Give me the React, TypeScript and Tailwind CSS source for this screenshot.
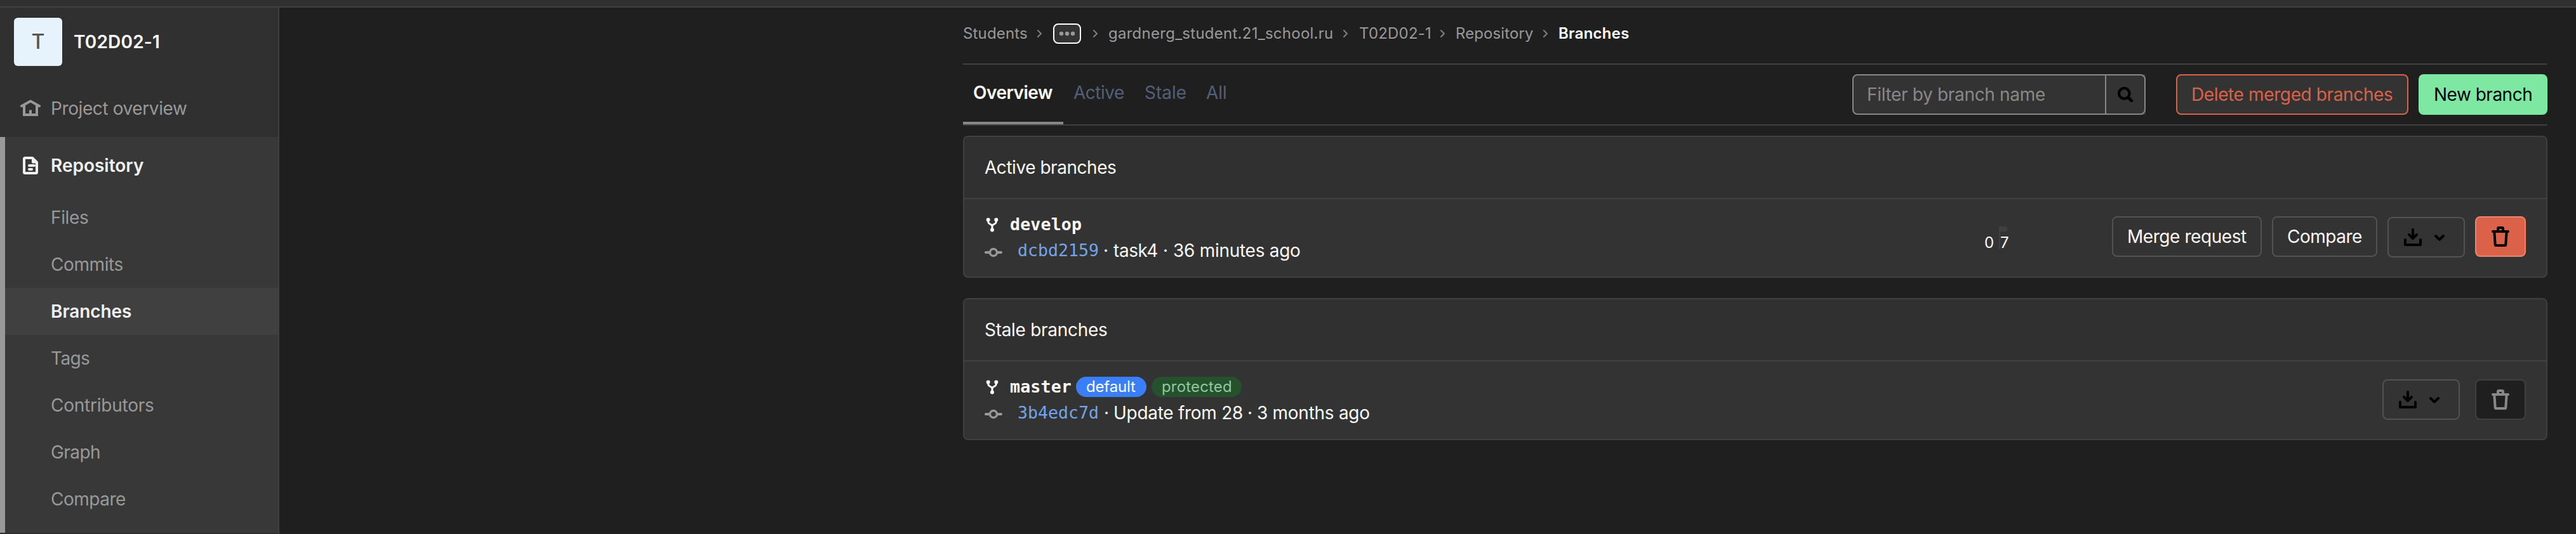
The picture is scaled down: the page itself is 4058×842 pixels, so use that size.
import type { ReactNode } from "react";

const navItems = [
  { label: "Files", tracking: "tracking-[-0.35px]" },
  { label: "Commits", tracking: "tracking-[-0.4px]" },
  { label: "Branches", tracking: "tracking-[-0.08px]", active: true },
  { label: "Tags", tracking: "tracking-[-0.6px]" },
  { label: "Contributors", tracking: "tracking-[-0.24px]" },
  { label: "Graph", tracking: "tracking-[-0.55px]" },
  { label: "Compare", tracking: "tracking-[-0.5px]" },
];

function HomeIcon() {
  return (
    <svg width="32" height="32" viewBox="0 0 32 32" fill="none" stroke="#999" strokeWidth="4">
      <path d="M2 12.2 16 4.6l14 7.6" strokeLinecap="round" strokeLinejoin="round" />
      <path d="M6 11v15h20V11M16 18.500v7" />
    </svg>
  );
}

function DocIcon() {
  return (
    <svg width="32" height="32" viewBox="0 0 32 32" fill="none" stroke="#f0f0f0" strokeWidth="4">
      <path d="M6 5.500Q6 4 7.500 4H19l7 7v15.500q0 1.500-1.500 1.500h-17Q6 28 6 26.500z" strokeLinejoin="round" />
      <path d="M18 3v8q0 1.500 1.500 1.500H27L19 3z" fill="#f0f0f0" stroke="none" />
      <path d="M14 16h8M14 22h4" strokeLinecap="round" />
    </svg>
  );
}

function CrumbSeparator() {
  return (
    <svg width="8" height="12" viewBox="0 0 8 12" fill="none" stroke="#808080" strokeWidth="2" className="shrink-0">
      <path d="m1 1 5 5-5 5" strokeLinecap="round" strokeLinejoin="round" />
    </svg>
  );
}

function BranchIcon() {
  return (
    <svg width="24" height="24" viewBox="0 0 24 24" fill="none" stroke="#fafafa" strokeWidth="3" className="shrink-0">
      <path d="M5.700 4v3.500q0 2 2 3.200l2.300 1.300q2 1 2 3.500v5M18.300 4v3.500q0 2-2 3.200L14 12q-2 1-2 3.500" />
      <circle cx="5.700" cy="4.500" r="3" fill="#fafafa" stroke="none" />
      <circle cx="18.300" cy="4.500" r="3" fill="#fafafa" stroke="none" />
      <circle cx="12" cy="20.500" r="3" fill="#fafafa" stroke="none" />
    </svg>
  );
}

function CommitIcon() {
  return (
    <svg width="28" height="28" viewBox="0 0 28 28" fill="none" stroke="#999" strokeWidth="4" className="shrink-0">
      <circle cx="14" cy="14" r="5.500" strokeWidth="3.400" />
      <path d="M2 14h5M21 14h5" strokeLinecap="round" />
    </svg>
  );
}

function DownloadIcon() {
  return (
    <svg width="28" height="28" viewBox="0 0 28 28" fill="none" stroke="#000" strokeWidth="4" strokeLinecap="round" strokeLinejoin="round" className="shrink-0">
      <path d="M14 2v13M8 10l6 6 6-6" />
      <path d="M2 18v8h24v-8" />
    </svg>
  );
}

function ChevronDown() {
  return (
    <svg width="16" height="10" viewBox="0 0 16 10" fill="none" stroke="#000" strokeWidth="4" strokeLinecap="round" strokeLinejoin="round" className="shrink-0">
      <path d="m2 2 6 5.700L14 2" />
    </svg>
  );
}

function TrashIcon({ color }: { color: string }) {
  return (
    <svg width="28" height="32" viewBox="0 0 28 32" fill="none" stroke={color} strokeWidth="4" className="shrink-0">
      <path d="M10 8V3.500Q10 2 11.500 2h5Q18 2 18 3.500V8" />
      <path d="M2 8h24" strokeLinecap="round" />
      <path d="m4.300 8 1.400 20.500Q5.800 30 7.300 30h13.400q1.500 0 1.600-1.500L23.700 8" />
    </svg>
  );
}

function SearchIcon() {
  return (
    <svg width="24" height="24" viewBox="0 0 24 24" fill="none" stroke="#000" className="shrink-0">
      <circle cx="10.300" cy="10.300" r="8.300" strokeWidth="4.200" />
      <path d="m16.500 16.500 5.200 5.200" strokeWidth="4.800" strokeLinecap="round" />
    </svg>
  );
}

function DownloadButton({ className }: { className: string }) {
  return (
    <button className={`flex h-16 w-[122px] shrink-0 items-start rounded-lg border-2 border-[#525252] pl-6 ${className}`}>
      <span className="mt-4">
        <DownloadIcon />
      </span>
      <span className="mt-[26px] ml-5">
        <ChevronDown />
      </span>
    </button>
  );
}

function BranchCard({ title, titleTracking, info, children }: { title: string; titleTracking: string; info: ReactNode; children: ReactNode }) {
  return (
    <section className="h-56 w-[2496px] overflow-hidden rounded-lg border-2 border-[#404040] bg-[#333]">
      <h2 className={`h-[98px] border-b-2 border-[#404040] bg-[#303030] pl-8 leading-[96px] text-[#fafafa] ${titleTracking}`}>{title}</h2>
      <div className="flex h-[122px] pr-8 pl-8">
        <div className="pt-[19px]">{info}</div>
        {children}
      </div>
    </section>
  );
}

export default function App() {
  return (
    <div className="flex h-[842px] w-[4058px] flex-col overflow-hidden bg-[#1f1f1f] font-['Inter',sans-serif] text-[28px] whitespace-nowrap">
      <header className="h-3 shrink-0 border-b-2 border-[#404040] bg-[#303030]" />
      <div className="flex h-[830px]">
        <aside className="flex w-[440px] shrink-0 flex-col border-r-2 border-[#404040] bg-[#303030] text-[#999]">
          <div className="flex h-[114px] items-start pt-4 pl-[22px]">
            <div className="flex size-[76px] items-center justify-center rounded-md bg-[#e7f3fc] text-[32px] font-medium text-[#555]">T</div>
            <div className="ml-[18px] text-[28px] leading-[76px] font-semibold tracking-[0.2px] text-white">T02D02-1</div>
          </div>
          <div className="flex h-[90px] items-center pl-8">
            <HomeIcon />
            <span className="ml-4 tracking-[-0.4px]">Project overview</span>
          </div>
          <nav className="h-[624px] border-l-8 border-[#999] bg-[#383838]">
            <div className="flex h-[90px] items-center pl-6 font-semibold text-[#f0f0f0]">
              <DocIcon />
              <span className="ml-4">Repository</span>
            </div>
            {navItems.map((item) => (
              <div
                key={item.label}
                className={`h-[74px] pl-[72px] leading-[74px] ${item.tracking} ${item.active ? "bg-[#404040] font-semibold text-[#f0f0f0]" : ""}`}
              >
                {item.label}
              </div>
            ))}
          </nav>
        </aside>

        <main className="pl-[1077px]">
          <div className="flex h-[90px] w-[2496px] items-center border-b-2 border-[#404040] pb-1.5 text-2xl text-[#999]">
            <span className="w-[117px] tracking-[0.15px]">Students</span>
            <CrumbSeparator />
            <span className="ml-[17px] flex h-8 w-11 items-center justify-center rounded-lg border-2 border-white bg-[#333]">
              <svg width="26" height="8" viewBox="0 0 26 8" fill="#999">
                <circle cx="4" cy="4" r="3.200" />
                <circle cx="13" cy="4" r="3.200" />
                <circle cx="22" cy="4" r="3.200" />
              </svg>
            </span>
            <span className="ml-[19px] flex">
              <CrumbSeparator />
            </span>
            <span className="ml-4 w-[370px] tracking-[0.26px]">gardnerg_student.21_school.ru</span>
            <CrumbSeparator />
            <span className="ml-[17px] w-32 tracking-[0.2px]">T02D02-1</span>
            <CrumbSeparator />
            <span className="ml-4 w-[138px] tracking-[0.1px]">Repository</span>
            <CrumbSeparator />
            <span className="ml-4 font-semibold tracking-[0.25px] text-white">Branches</span>
          </div>

          <div className="flex h-24 w-[2496px] items-start border-b-2 border-[#404040] text-[#53607a]">
            <div className="h-[94px] w-[158px] border-b-4 border-[#888] pl-4 leading-[88px] font-semibold tracking-[-0.49px] text-white">Overview</div>
            <div className="w-[112px] pl-4 leading-[88px] tracking-[-0.49px]">Active</div>
            <div className="w-24 pl-4 leading-[88px]">Stale</div>
            <div className="pl-[17px] leading-[88px]">All</div>
            <div className="mt-[15px] ml-auto flex h-16">
              <div className="flex w-[462px] rounded-l-lg bg-[#333]">
                <div className="flex w-full rounded-lg border-2 border-[#888]">
                  <div className="w-[398px] border-r-2 border-[#888] pl-[21px] leading-[60px] tracking-[-0.33px] text-[#888]">Filter by branch name</div>
                  <button className="flex w-[60px] items-center pl-[18px]">
                    <SearchIcon />
                  </button>
                </div>
              </div>
              <button className="ml-12 w-[366px] rounded-lg border-2 border-[#db6249] bg-[#333] pl-[22px] text-left tracking-[-0.38px] text-[#db6249]">
                Delete merged branches
              </button>
              <button className="ml-4 w-[203px] rounded-lg bg-[#7ee8a2] pl-6 text-left tracking-[-0.5px] text-black">New branch</button>
            </div>
          </div>

          <div className="flex flex-col gap-8 pt-4">
            <BranchCard
              title="Active branches"
              titleTracking="tracking-[-0.46px]"
              info={
                <>
                  <div className="flex h-[42px] items-center">
                    <BranchIcon />
                    <span className="ml-4 font-['DejaVu_Sans_Mono',monospace] text-[26.6px] font-bold tracking-[0.15px] text-[#fafafa]">develop</span>
                  </div>
                  <div className="flex h-10 items-center">
                    <span className="mt-1.5 flex">
                      <CommitIcon />
                    </span>
                    <span className="ml-6 w-[135px] font-['DejaVu_Sans_Mono',monospace] text-[26.6px] text-[#73a5e5]">dcbd2159</span>
                    <span className="w-[16px] text-[#fafafa]">·</span>
                    <span className="w-[78px] tracking-[-0.4px] text-[#fafafa]">task4</span>
                    <span className="w-[16px] text-[#fafafa]">·</span>
                    <span className="tracking-[-0.28px] text-[#fafafa]">36 minutes ago</span>
                  </div>
                </>
              }
            >
              <div className="ml-auto flex items-start pt-[27px] text-[#fafafa]">
                <div className="mt-4 mr-[163px] flex h-9 text-2xl leading-[52px]">
                  <span className="w-[23px]">0</span>
                  <span className="flex w-[15px] flex-col border-l-2 border-[#404040]">
                    <span className="h-2 w-[11px] shrink-0 rounded-r bg-[#404040]" />
                    <span className="-mt-2 shrink-0">7</span>
                  </span>
                </div>
                <button className="h-16 w-[236px] rounded-lg border-2 border-[#525252] pl-[22px] text-left tracking-[-0.44px]">Merge request</button>
                <button className="ml-4 h-16 w-[166px] rounded-lg border-2 border-[#525252] pl-[22px] text-left tracking-[-0.5px]">Compare</button>
                <DownloadButton className="mt-px ml-4" />
                <button className="ml-4 flex h-16 w-20 items-start justify-center rounded-lg border-2 border-[#ea8570] bg-[#db6249] pt-3.5">
                  <TrashIcon color="#000" />
                </button>
              </div>
            </BranchCard>

            <BranchCard
              title="Stale branches"
              titleTracking="tracking-[-0.29px]"
              info={
                <>
                  <div className="flex h-[42px] items-center">
                    <BranchIcon />
                    <span className="ml-4 w-[104px] font-['DejaVu_Sans_Mono',monospace] text-[26.6px] font-bold tracking-[0.15px] text-[#fafafa]">master</span>
                    <span className="h-8 w-[111px] rounded-full bg-[#3a7ff8] pl-4 text-2xl leading-8 tracking-[-0.17px] text-white">default</span>
                    <span className="ml-2 h-8 w-[142px] rounded-full bg-[#25522c] pl-4 text-2xl leading-8 tracking-[0.17px] text-[#91c89f]">protected</span>
                  </div>
                  <div className="flex h-10 items-center">
                    <span className="mt-1 flex">
                      <CommitIcon />
                    </span>
                    <span className="ml-6 w-[136px] font-['DejaVu_Sans_Mono',monospace] text-[26.6px] text-[#73a5e5]">3b4edc7d</span>
                    <span className="w-[15px] text-[#fafafa]">·</span>
                    <span className="w-[211px] tracking-[-0.28px] text-[#fafafa]">Update from 28</span>
                    <span className="w-[15px] text-[#fafafa]">·</span>
                    <span className="tracking-[-0.28px] text-[#fafafa]">3 months ago</span>
                  </div>
                </>
              }
            >
              <div className="ml-auto flex items-start pt-7">
                <DownloadButton className="" />
                <button className="ml-6 flex h-16 w-20 items-start justify-center rounded-lg border-2 border-[#404040] bg-[#1f1f1f] pt-3.5">
                  <TrashIcon color="#888" />
                </button>
              </div>
            </BranchCard>
          </div>
        </main>
      </div>
    </div>
  );
}
